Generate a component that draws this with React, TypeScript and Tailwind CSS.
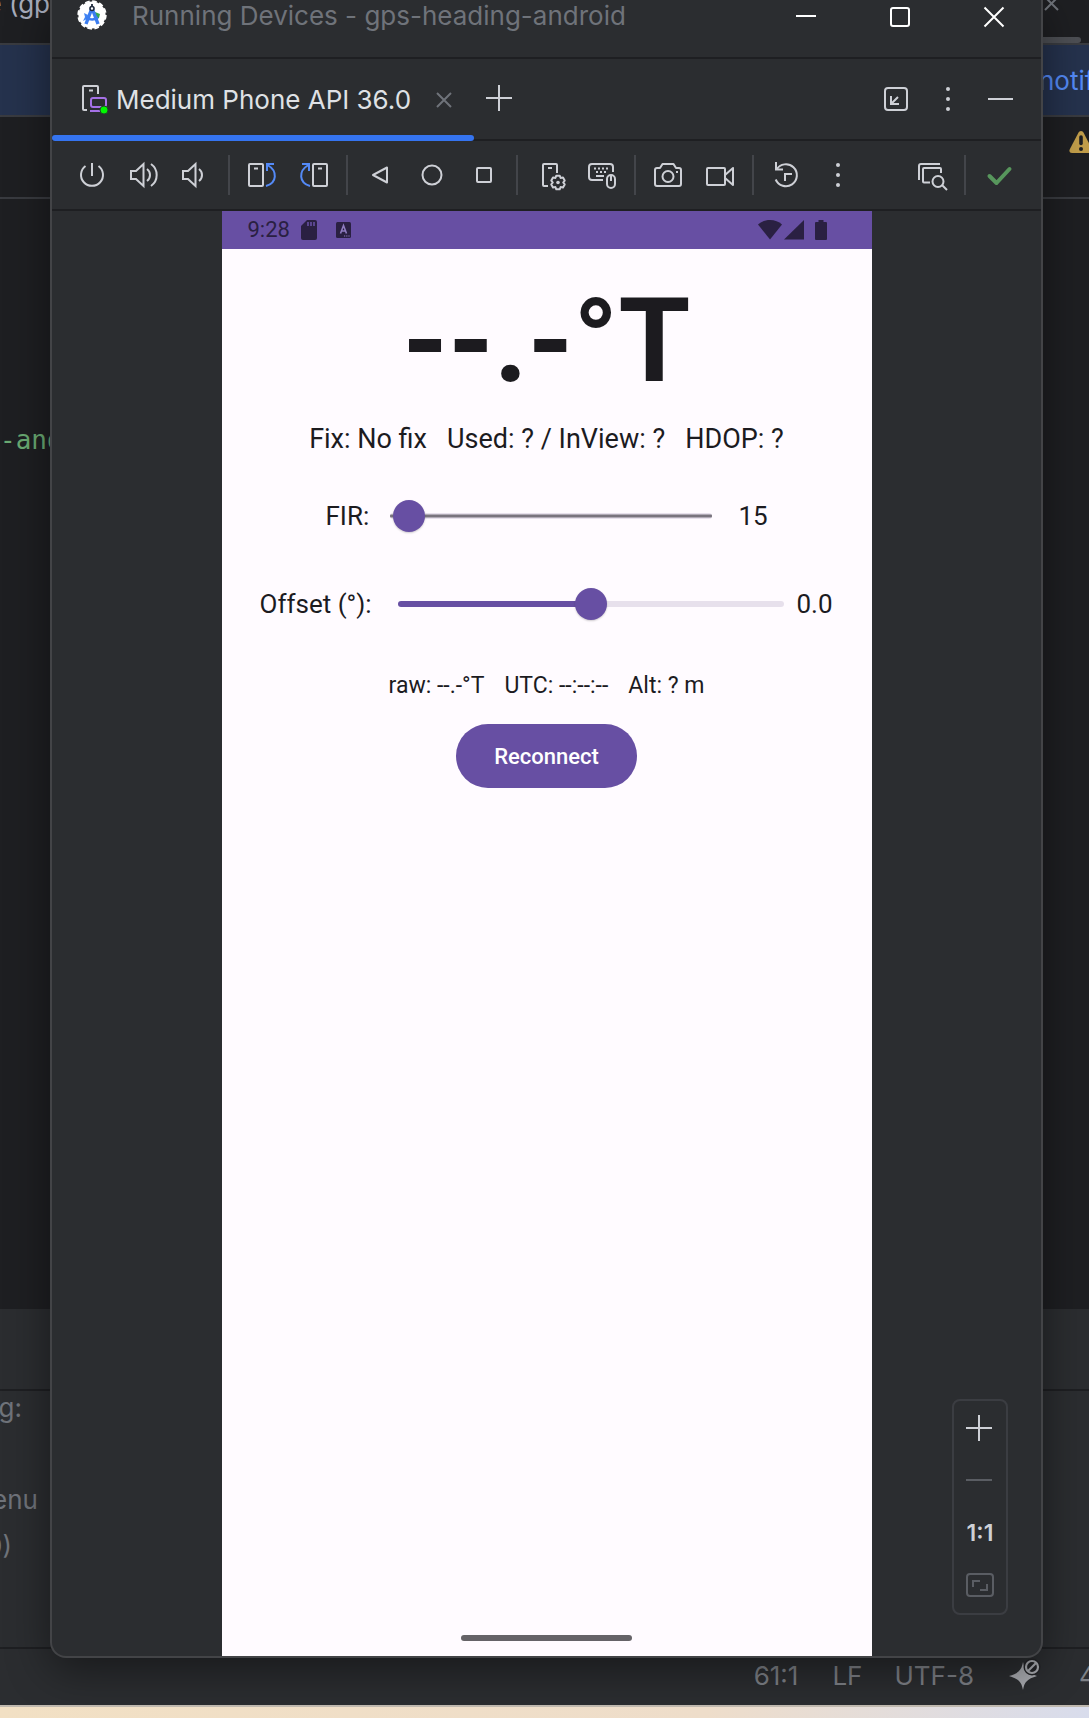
import { useState, type ReactNode } from "react";

const GEAR =
  "M-1.7-6.8H1.7L2.6-4.5 5-4.9 6.7-1.9 5.2 0 6.7 1.9 5 4.9 2.6 4.5 1.7 6.8H-1.7L-2.6 4.5-5 4.9-6.7 1.9-5.2 0-6.7-1.9-5-4.9-2.6-4.5Z";

function Icon({ children }: { children: ReactNode }) {
  return (
    <svg
      viewBox="0 0 40 40"
      className="size-10 shrink-0"
      fill="none"
      stroke="currentColor"
      strokeWidth="2"
      aria-hidden="true"
    >
      {children}
    </svg>
  );
}

function ToolButton({ label, children }: { label: string; children: ReactNode }) {
  return (
    <button type="button" aria-label={label} className="flex h-[52px] w-[52px] shrink-0 items-center justify-center">
      <Icon>{children}</Icon>
    </button>
  );
}

function Divider() {
  return <div className="mx-[6px] h-10 w-[2px] shrink-0 bg-[#43454a]" />;
}

function Dots() {
  return (
    <g fill="currentColor" stroke="none">
      <circle cx="20" cy="10" r="2" />
      <circle cx="20" cy="20" r="2" />
      <circle cx="20" cy="30" r="2" />
    </g>
  );
}

function StudioLogo() {
  return (
    <svg viewBox="0 0 32 32" className="size-8 shrink-0" aria-hidden="true">
      <circle cx="16" cy="16" r="13.6" fill="#fff" />
      <circle cx="16" cy="16" r="13.8" fill="none" stroke="#fff" strokeWidth="1.8" strokeDasharray="4.6 2.6" />
      <path d="M19 13l5 2-1 4-4 .5z" fill="#34a853" />
      <path d="M8 14l4 2-1 4-4 2 2-4z" fill="#4285f4" />
      <path d="M16 9L10 25M16 9l6 16" stroke="#3b7df0" strokeWidth="3.4" fill="none" />
      <path d="M10 18.5c4 2.6 8.500 2.600 12 0" stroke="#3b7df0" strokeWidth="2.400" fill="none" />
      <circle cx="16" cy="9.500" r="2" fill="#fff" stroke="#1f2a3c" strokeWidth="1.600" />
      <path d="M16 5v3" stroke="#1f2a3c" strokeWidth="1.800" />
    </svg>
  );
}

function Backdrop() {
  return (
    <div className="col-start-1 row-start-1 flex flex-col overflow-hidden bg-[#1e1f22] text-[26px] text-[#6f737a]">
      <div className="flex h-[43px] justify-between">
        <div className="flex w-[50px] justify-end overflow-hidden whitespace-pre leading-[8px] text-[#a8adbd]">e (gp</div>
        <div className="flex w-[46px] flex-col justify-between">
          <svg viewBox="0 0 18 12" className="h-3 w-[18px]" stroke="#6f737a" strokeWidth="2" aria-hidden="true">
            <path d="M2-3l13 13M15-3L2 10" />
          </svg>
          <div className="mr-2 h-[6px] rounded-r-full bg-[#4d4f54]" />
        </div>
      </div>
      <div className="flex h-[74px] items-center justify-end border-y-2 border-[#393b40] bg-[#25324d]">
        <a href="#notifications" className="w-[50px] overflow-hidden whitespace-nowrap text-[#548af7]">
          notifications
        </a>
      </div>
      <div className="flex h-[82px] justify-end border-b-2 border-[#393b40] pt-[13px]">
        <div className="w-5 overflow-hidden">
          <svg viewBox="0 0 24 24" className="h-6 w-6" aria-hidden="true">
            <path d="M12 1c1.300 0 2 .700 2.600 1.800l8.600 16.500c1 2-.2 3.700-2.200 3.700H3c-2 0-3.200-1.700-2.200-3.700L9.400 2.800C10 1.700 10.700 1 12 1z" fill="#c29e4a" />
            <path d="M12 7v6.500" stroke="#1e1f22" strokeWidth="3.600" strokeLinecap="round" />
            <circle cx="12" cy="19" r="2" fill="#1e1f22" />
          </svg>
        </div>
      </div>
      <div className="flex-1 overflow-hidden pt-[225px]">
        <div className="font-['DejaVu_Sans_Mono',monospace] leading-[32px] text-[#6aab73]">-android</div>
      </div>
      <div className="h-[82px] border-b-2 border-[#1e1f22] bg-[#2b2d30]" />
      <div className="h-[258px] border-b-2 border-[#1e1f22] bg-[#2b2d30]">
        <div className="flex w-[22px] justify-end leading-[34px]">g:</div>
        <div className="mt-[52px] flex w-[38px] justify-end leading-[46px]">enu</div>
        <div className="flex w-3 justify-end leading-[46px]">0)</div>
      </div>
      <div className="flex h-14 items-center justify-end bg-[#2b2d30] pb-1 text-[#7e8187]">
        <span className="mr-[34px]">61:1</span>
        <span className="mr-[32px]">LF</span>
        <span className="mr-[34px]">UTF-8</span>
        <svg viewBox="0 0 34 34" className="mr-[37px] size-[34px]" aria-hidden="true">
          <path d="M15 4c1.500 8 4 11 14 14-10 3-12.500 6-14 14C13.500 24 11 21 1 18c10-3 12.500-6 14-14z" fill="#a9abb0" />
          <circle cx="24" cy="9" r="8.500" fill="#232427" />
          <circle cx="24" cy="9" r="6" fill="none" stroke="#a9abb0" strokeWidth="2.200" />
          <path d="M20 13l8-8" stroke="#a9abb0" strokeWidth="2.200" />
        </svg>
        <span className="w-[10px] overflow-hidden whitespace-nowrap">4 spaces</span>
      </div>
    </div>
  );
}

function TitleBar() {
  return (
    <header className="flex h-[59px] items-center border-b-2 border-[#1e1f22] pb-[27px] pl-6">
      <StudioLogo />
      <h1 className="ml-6 flex-1 whitespace-nowrap pt-[2px] text-[26px] leading-[30px] text-[#6f737a]">
        Running Devices - gps-heading-android
      </h1>
      <div className="flex text-white">
        <button type="button" aria-label="Minimize" className="flex h-[30px] w-[94px] items-center justify-center">
          <Icon><path d="M10 21h20" /></Icon>
        </button>
        <button type="button" aria-label="Maximize" className="flex h-[30px] w-[94px] items-center justify-center">
          <Icon><rect x="11" y="13" width="18" height="18" rx="2" /></Icon>
        </button>
        <button type="button" aria-label="Close" className="flex h-[30px] w-[94px] items-center justify-center">
          <Icon><path d="M10.500 12.500l19 19M29.500 12.500l-19 19" /></Icon>
        </button>
      </div>
    </header>
  );
}

function TabBar() {
  return (
    <div className="flex h-[82px] items-stretch border-b-2 border-[#1e1f22] text-[#ced0d6]">
      <div className="-mb-[2px] flex w-[422px] flex-col">
        <div className="flex flex-1 items-center pl-[22px] pt-[6px]">
          <Icon>
            <path d="M13 30h-3a1 1 0 0 1-1-1V7a1 1 0 0 1 1-1h13a1 1 0 0 1 1 1v7M15 10.500h4" />
            <rect x="17" y="18" width="15" height="9" rx="2" stroke="#a571e6" />
            <path d="M16 31h11" stroke="#a571e6" />
            <circle cx="30" cy="30" r="4" fill="#00f800" stroke="#1d4a24" strokeWidth="1" />
          </Icon>
          <span className="ml-[2px] whitespace-nowrap text-[26px] leading-8 text-[#dfe1e5]">Medium Phone API 36.0</span>
          <button type="button" aria-label="Close tab" className="ml-[13px] text-[#6f737a]">
            <Icon><path d="M13 13l14 14M27 13L13 27" /></Icon>
          </button>
        </div>
        <div className="h-[6px] rounded-full bg-[#3574f0]" />
      </div>
      <div className="flex flex-1 items-center pr-[15px]">
        <button type="button" aria-label="New tab" className="ml-[5px]">
          <Icon><path d="M7 19h26M20 6v26" /></Icon>
        </button>
        <div className="flex flex-1 justify-end">
          <ToolButton label="Dock window">
            <rect x="9" y="9" width="22" height="22" rx="3" />
            <path d="M22 18l-7 7M15 17v8h8" />
          </ToolButton>
          <ToolButton label="Options"><Dots /></ToolButton>
          <ToolButton label="Hide"><path d="M8 20h25" /></ToolButton>
        </div>
      </div>
    </div>
  );
}

function Speaker() {
  return (
    <>
      <path d="M7 16h5l7.500-7v22l-7.500-7H7z" />
      <path d="M23 14a7.500 7.500 0 0 1 0 12" />
    </>
  );
}

function RotateShape() {
  return (
    <>
      <rect x="7" y="9" width="14" height="22" rx="1" />
      <path d="M12 13.500h4" />
      <path d="M24 31c11-3 12-15 1.500-21M25 16V9h7" stroke="#548af7" />
    </>
  );
}

function DeviceToolbar() {
  return (
    <div className="flex h-[70px] items-center justify-between border-b-2 border-[#1e1f22] pl-[14px] pr-[17px] text-[#ced0d6]">
      <div className="flex items-center">
        <ToolButton label="Power">
          <path d="M13.500 11A11 11 0 1 0 26.500 11M20 8v13" />
        </ToolButton>
        <ToolButton label="Volume up">
          <Speaker />
          <path d="M27 9a13.500 13.500 0 0 1 0 22" />
        </ToolButton>
        <ToolButton label="Volume down"><Speaker /></ToolButton>
        <Divider />
        <ToolButton label="Rotate left"><RotateShape /></ToolButton>
        <ToolButton label="Rotate right">
          <g transform="matrix(-1 0 0 1 40 0)"><RotateShape /></g>
        </ToolButton>
        <Divider />
        <ToolButton label="Back"><path d="M27 12.500v15L13 20z" strokeLinejoin="round" /></ToolButton>
        <ToolButton label="Home"><circle cx="20" cy="20" r="9.500" /></ToolButton>
        <ToolButton label="Overview"><rect x="13" y="13" width="14" height="14" rx="1" /></ToolButton>
        <Divider />
        <ToolButton label="Device settings">
          <path d="M18 31h-4a1 1 0 0 1-1-1V10a1 1 0 0 1 1-1h12a1 1 0 0 1 1 1v8M18 13h4" />
          <g transform="translate(28 27.500)">
            <path d={GEAR} strokeLinejoin="round" />
            <circle r="1.800" fill="currentColor" stroke="none" />
          </g>
        </ToolButton>
        <ToolButton label="Hardware input">
          <path d="M21 25H10a3 3 0 0 1-3-3V12a3 3 0 0 1 3-3h18a3 3 0 0 1 3 3v5M14 21h8" />
          <path d="M12 13.500h14M14 17h12" strokeDasharray="2 2" />
          <rect x="25" y="20" width="8" height="13" rx="4" />
          <path d="M29 20v6" />
        </ToolButton>
        <Divider />
        <ToolButton label="Take screenshot">
          <path d="M14.500 9h11l2.500 4h3a2 2 0 0 1 2 2v14a2 2 0 0 1-2 2H9a2 2 0 0 1-2-2V15a2 2 0 0 1 2-2h3z" strokeLinejoin="round" />
          <circle cx="20" cy="21.500" r="5.500" />
          <path d="M28 17h2" />
        </ToolButton>
        <ToolButton label="Record screen">
          <rect x="7" y="13" width="18" height="17" rx="1" />
          <path d="M25 20l8-7v17l-8-7" strokeLinejoin="round" />
        </ToolButton>
        <Divider />
        <ToolButton label="Snapshots">
          <path d="M10.500 14.500A11 11 0 1 1 9.700 24.500M10 7v7.500h7M19 26v-7h7" />
        </ToolButton>
        <ToolButton label="More"><Dots /></ToolButton>
      </div>
      <div className="flex items-center">
        <ToolButton label="Layout inspector">
          <path d="M7 25V11a2 2 0 0 1 2-2h19" />
          <path d="M18 27.500h-6a1 1 0 0 1-1-1V14a1 1 0 0 1 1-1h16a1 1 0 0 1 1 1v4" />
          <circle cx="26" cy="26.500" r="5.500" />
          <path d="M30 30l5 5" />
        </ToolButton>
        <Divider />
        <ToolButton label="Connected">
          <path d="M11.500 21l7 7 13-14" stroke="#57965c" strokeWidth="4" strokeLinecap="round" strokeLinejoin="round" />
        </ToolButton>
      </div>
    </div>
  );
}

function PhoneStatusBar() {
  return (
    <div className="flex h-[38px] items-center bg-[#674fa3] pl-[26px] pr-[44px] text-[#2a2042]">
      <span className="text-[22px] leading-[38px]">9:28</span>
      <svg viewBox="0 0 16 20" className="ml-[11px] h-5 w-4" aria-hidden="true">
        <path d="M6 0h8a2 2 0 0 1 2 2v16a2 2 0 0 1-2 2H2a2 2 0 0 1-2-2V6z" fill="currentColor" />
        <path d="M7 2v4M10 2v4M13 2v4" stroke="#674fa3" strokeWidth="1.600" />
      </svg>
      <svg viewBox="0 0 15 16" className="ml-[19px] h-4 w-[15px]" fill="none" aria-hidden="true">
        <rect width="15" height="16" rx="1.500" fill="currentColor" />
        <path d="M4.500 11.500l3-8 3 8M5.500 9h4" stroke="#8f7cc0" strokeWidth="1.600" />
        <path d="M8 14h6" stroke="#8f7cc0" strokeWidth="1.200" strokeDasharray="1.200 1" />
      </svg>
      <div className="flex-1" />
      <svg viewBox="0 0 70 22" className="h-[22px] w-[70px]" fill="currentColor" aria-hidden="true">
        <path d="M0 5.500C6-.5 18-.5 24 5.500L12 20.500z" />
        <path d="M46 1v19.500H26z" />
        <path d="M60.500 1h5v2H68a1 1 0 0 1 1 1v16a1 1 0 0 1-1 1H58a1 1 0 0 1-1-1V4a1 1 0 0 1 1-1h2.500z" />
      </svg>
    </div>
  );
}

const SLIDER =
  "h-12 min-w-0 cursor-pointer appearance-none bg-transparent [&::-webkit-slider-runnable-track]:h-[6px] [&::-webkit-slider-runnable-track]:rounded-full [&::-webkit-slider-thumb]:-mt-[13px] [&::-webkit-slider-thumb]:size-8 [&::-webkit-slider-thumb]:appearance-none [&::-webkit-slider-thumb]:rounded-full [&::-webkit-slider-thumb]:bg-[#674fa3] [&::-webkit-slider-thumb]:shadow-[0_1px_2px_rgba(0,0,0,0.2)]";

function Phone() {
  const [fir, setFir] = useState(15);
  const [offset, setOffset] = useState(0);

  return (
    <main className="flex w-full max-w-[650px] flex-col bg-[#fffbff] font-['Roboto',sans-serif] text-[#1c1b1f]">
      <PhoneStatusBar />
      <div className="flex flex-1 flex-col items-center pt-8">
        <div className="text-[116px] font-bold leading-[120px]">--.-°T</div>
        <p className="mt-[22px] whitespace-pre text-[27px] leading-8">Fix: No fix   Used: ? / InView: ?   HDOP: ?</p>
        <div className="mt-[37px] flex items-center text-[26px] leading-8">
          <label htmlFor="fir" className="w-16 whitespace-nowrap">FIR:</label>
          <input
            id="fir"
            type="range"
            min={1}
            max={1201}
            value={fir}
            onChange={(e) => setFir(Number(e.target.value))}
            className={`w-[322px] [&::-webkit-slider-runnable-track]:bg-[linear-gradient(#e7e0ec_0_1px,#79747e_2px_4px,#e7e0ec_5px)] ${SLIDER}`}
          />
          <output htmlFor="fir" className="ml-[27px] w-[29px]">{fir}</output>
        </div>
        <div className="mt-10 flex items-center text-[26px] leading-8">
          <label htmlFor="offset" className="w-[138px] whitespace-nowrap">Offset (°):</label>
          <input
            id="offset"
            type="range"
            min={-180}
            max={180}
            value={offset}
            onChange={(e) => setOffset(Number(e.target.value))}
            className={`w-[386px] [&::-webkit-slider-runnable-track]:bg-[linear-gradient(to_right,#674fa3_50%,#e7e0ec_50%)] ${SLIDER}`}
          />
          <output htmlFor="offset" className="ml-[13px] w-[37px]">{offset.toFixed(1)}</output>
        </div>
        <p className="mt-11 flex gap-5 whitespace-nowrap text-[23px] leading-7">
          <span>raw: --.-°T</span>
          <span>UTC: --:--:--</span>
          <span>Alt: ? m</span>
        </p>
        <button type="button" className="mt-6 h-16 w-[181px] rounded-full bg-[#674fa3] text-[22px] font-medium text-white">
          Reconnect
        </button>
      </div>
      <div className="mb-[15px] h-[6px] w-[171px] self-center rounded-full bg-[#656367]" />
    </main>
  );
}

function ZoomPanel() {
  return (
    <div className="absolute bottom-[41px] right-[33px] flex w-14 flex-col items-center rounded-lg border-2 border-[#43454a]/70 py-[2px] text-[#ced0d6]">
      <ToolButton label="Zoom in"><path d="M6 19h26M19 6v26" /></ToolButton>
      <ToolButton label="Zoom out"><path d="M6 19h26" stroke="#5a5d63" /></ToolButton>
      <button type="button" className="h-[52px] w-[52px] text-[23px] font-semibold">1:1</button>
      <ToolButton label="Zoom to fit">
        <g stroke="#5a5d63">
          <rect x="7" y="9" width="26" height="22" rx="3" />
          <path d="M13 22v-6h7M27 19v6h-7" />
        </g>
      </ToolButton>
    </div>
  );
}

function DeviceWindow() {
  return (
    <div className="z-10 col-start-1 row-start-1 mb-[47px] ml-[50px] mr-[46px] flex min-w-0 flex-col overflow-hidden rounded-b-2xl border-2 border-t-0 border-[#434447] bg-[#2b2d30] shadow-[0_12px_44px_rgba(0,0,0,0.45)]">
      <TitleBar />
      <TabBar />
      <DeviceToolbar />
      <div className="relative flex flex-1 items-stretch justify-center">
        <Phone />
        <ZoomPanel />
      </div>
    </div>
  );
}

export default function App() {
  return (
    <div className="flex min-h-screen flex-col overflow-hidden font-['Inter',sans-serif]">
      <div className="grid flex-1 grid-cols-1 overflow-hidden">
        <Backdrop />
        <DeviceWindow />
      </div>
      <div className="h-[13px] border-t-2 border-[#bfb8ae] bg-linear-to-r from-[#f2e0c4] via-[#eeddca] via-65% to-[#d8dcec]" />
    </div>
  );
}
